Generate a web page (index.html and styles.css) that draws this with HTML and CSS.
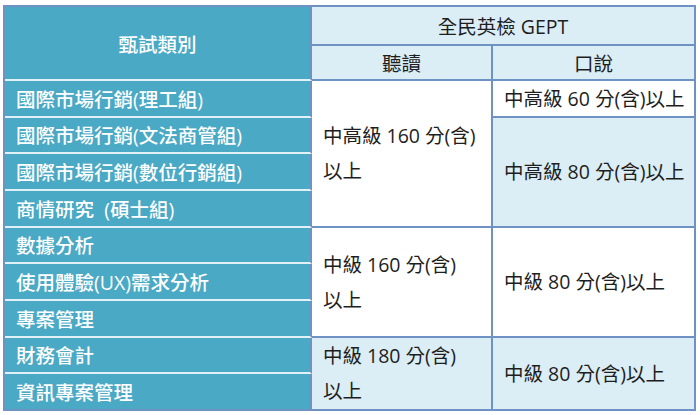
FILE: index.html
```html
<!DOCTYPE html>
<html lang="zh-Hant">
<head>
<meta charset="utf-8">
<title>甄試類別</title>
<link rel="stylesheet" href="styles.css">
</head>
<body>
<div class="grid">
  <div class="cell cat head span-h">甄試類別</div>
  <div class="cell hd gept">全民英檢 GEPT</div>
  <div class="cell hd listen r2">聽讀</div>
  <div class="cell hd speak r2">口說</div>

  <div class="cell cat r3">國際市場行銷(理工組)</div>
  <div class="cell cat r4">國際市場行銷(文法商管組)</div>
  <div class="cell cat r5">國際市場行銷(數位行銷組)</div>
  <div class="cell cat r6">商情研究&nbsp; (碩士組)</div>
  <div class="cell cat r7">數據分析</div>
  <div class="cell cat r8">使用體驗(UX)需求分析</div>
  <div class="cell cat r9">專案管理</div>
  <div class="cell cat r10">財務會計</div>
  <div class="cell cat r11 last">資訊專案管理</div>

  <div class="cell val listen g1-listen">中高級 160 分(含)<br>以上</div>
  <div class="cell val speak r3">中高級 60 分(含)以上</div>
  <div class="cell val tint speak g1-speak">中高級 80 分(含)以上</div>

  <div class="cell val listen g2">中級 160 分(含)<br>以上</div>
  <div class="cell val speak g2">中級 80 分(含)以上</div>

  <div class="cell val tint listen g3">中級 180 分(含)<br>以上</div>
  <div class="cell val tint speak g3">中級 80 分(含)以上</div>
</div>
</body>
</html>
```
FILE: styles.css
```css
html, body {
  margin: 0;
  padding: 0;
  background: #ffffff;
}

.grid {
  margin: 5px 0 0 3px;
  width: 691px;
  display: grid;
  grid-template-columns: 307px 181px 203px;
  grid-template-rows: 39px 35px repeat(9, 36.67px);
  border-left: 2px solid #6f92c4;
  border-top: 2px solid #6f92c4;
  font-family: "Open Sans", "Noto Sans CJK TC", sans-serif;
  font-size: 19.5px;
  font-weight: 400;
  color: #1e1e1e;
}

.cell {
  box-sizing: border-box;
  border-right: 2px solid #6f92c4;
  border-bottom: 2px solid #6f92c4;
  display: flex;
  align-items: center;
  white-space: nowrap;
  min-width: 0;
  min-height: 0;
}

.cat {
  grid-column: 1;
  background: #4aa9c5;
  color: #ffffff;
  font-weight: 500;
  padding-left: 11px;
  border-bottom-color: #e2f1f7;
}

.cat.last {
  border-bottom-color: #6f92c4;
}

.head {
  justify-content: center;
  padding-left: 0;
}

.span-h {
  grid-row: 1 / span 2;
}

.hd {
  background: #dbedf5;
  justify-content: center;
}

.gept {
  grid-column: 2 / span 2;
  grid-row: 1;
}

.listen { grid-column: 2; }
.speak { grid-column: 3; }

.r2 { grid-row: 2; }
.r3 { grid-row: 3; }
.r4 { grid-row: 4; }
.r5 { grid-row: 5; }
.r6 { grid-row: 6; }
.r7 { grid-row: 7; }
.r8 { grid-row: 8; }
.r9 { grid-row: 9; }
.r10 { grid-row: 10; }
.r11 { grid-row: 11; }

.val {
  background: #ffffff;
  padding-left: 11px;
  line-height: 35px;
}

.val.tint {
  background: #dbedf5;
}

.g1-listen { grid-row: 3 / span 4; }
.g1-speak { grid-row: 4 / span 3; }
.g2 { grid-row: 7 / span 3; }
.g3 { grid-row: 10 / span 2; }
```
